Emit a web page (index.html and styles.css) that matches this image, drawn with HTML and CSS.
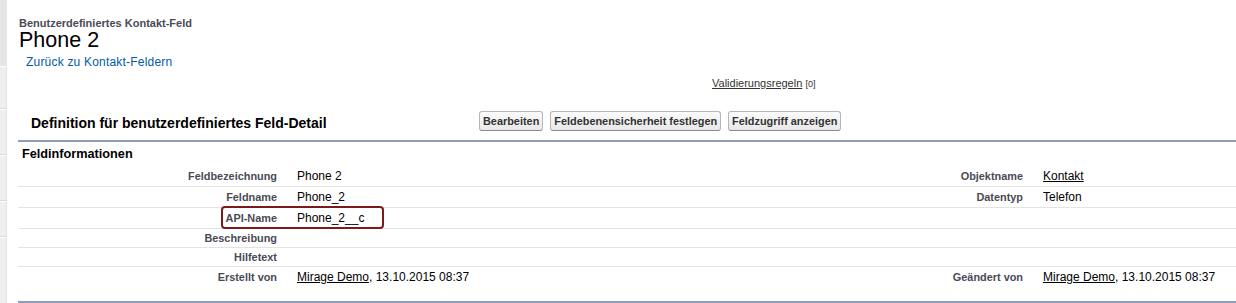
FILE: index.html
```html
<!DOCTYPE html>
<html lang="de">
<head>
  <meta charset="UTF-8" />
  <title>Phone 2 – Benutzerdefiniertes Kontakt-Feld</title>
  <link rel="stylesheet" href="styles.css">
</head>
<body>
  <div class="page">
    <aside class="side-strip">
      <div class="strip-top"></div>
      <div class="strip-seg seg-1"></div>
      <div class="strip-seg seg-2"></div>
      <div class="strip-seg seg-3"></div>
      <div class="strip-seg seg-4"></div>
      <div class="strip-seg seg-5"></div>
    </aside>

    <main class="content">
      <header class="page-head">
        <div class="page-type">Benutzerdefiniertes Kontakt-Feld</div>
        <h1 class="page-title">Phone 2</h1>
        <a class="back-link" href="#">Zurück zu Kontakt-Feldern</a>
      </header>

      <div class="related-links">
        <a href="#">Validierungsregeln</a> <span class="count">[0]</span>
      </div>

      <section class="detail-block">
        <div class="block-head">
          <h2 class="block-title">Definition für benutzerdefiniertes Feld-Detail</h2>
          <div class="block-buttons">
            <button type="button" class="btn">Bearbeiten</button>
            <button type="button" class="btn">Feldebenensicherheit festlegen</button>
            <button type="button" class="btn">Feldzugriff anzeigen</button>
          </div>
        </div>

        <h3 class="sub-title">Feldinformationen</h3>

        <div class="detail-list">
          <div class="row">
            <div class="label">Feldbezeichnung</div>
            <div class="value">Phone 2</div>
            <div class="label">Objektname</div>
            <div class="value"><a href="#">Kontakt</a></div>
          </div>
          <div class="row">
            <div class="label">Feldname</div>
            <div class="value">Phone_2</div>
            <div class="label">Datentyp</div>
            <div class="value">Telefon</div>
          </div>
          <div class="row">
            <div class="label">API-Name</div>
            <div class="value">Phone_2__c</div>
            <div class="label"></div>
            <div class="value"></div>
            <span class="highlight"></span>
          </div>
          <div class="row">
            <div class="label">Beschreibung</div>
            <div class="value"></div>
            <div class="label"></div>
            <div class="value"></div>
          </div>
          <div class="row">
            <div class="label">Hilfetext</div>
            <div class="value"></div>
            <div class="label"></div>
            <div class="value"></div>
          </div>
          <div class="row last">
            <div class="label">Erstellt von</div>
            <div class="value"><a href="#">Mirage Demo</a>, 13.10.2015 08:37</div>
            <div class="label">Geändert von</div>
            <div class="value"><a href="#">Mirage Demo</a>, 13.10.2015 08:37</div>
          </div>
        </div>
      </section>
    </main>
  </div>
</body>
</html>
```

FILE: styles.css
```css
body {
  margin: 0;
  padding: 0;
  background: #fff;
  font-family: "Liberation Sans", Arial, sans-serif;
  color: #000;
  overflow: hidden;
}
.page {
  display: flex;
  height: 303px;
}

/* left navigation strip */
.side-strip {
  width: 7px;
  flex-shrink: 0;
  display: flex;
  flex-direction: column;
}
.strip-top {
  height: 66px;
  background: #e6e6e6;
}
.strip-seg {
  background: #efefef;
  border-top: 1px solid #fff;
  border-bottom: 1px solid #d9d9d9;
  border-right: 1px solid #e2e2e2;
}
.seg-1 { height: 41px; }
.seg-2 { height: 44px; }
.seg-3 { height: 44px; }
.seg-4 { height: 34px; }
.seg-5 { flex: 1; border-bottom: none; }

.content {
  flex: 1;
  margin-left: 11px;
}

/* page header */
.page-head {
  padding-top: 16px;
}
.page-type {
  font-size: 11px;
  line-height: 14px;
  font-weight: bold;
  color: #4a4a56;
  padding-left: 1px;
}
.page-title {
  margin: 0;
  font-size: 21.5px;
  line-height: 20px;
  font-weight: normal;
  padding-left: 1px;
}
.back-link {
  display: block;
  margin-top: 4px;
  padding-left: 8px;
  font-size: 12px;
  line-height: 16px;
  letter-spacing: 0.2px;
  color: #015ba7;
  text-decoration: none;
}

.related-links {
  margin-top: 6px;
  padding-left: 694px;
  font-size: 11px;
  line-height: 14px;
}
.related-links a {
  color: #333;
}
.related-links .count {
  font-size: 9px;
  color: #333;
}

/* detail block */
.detail-block {
  border-bottom: 2px solid #8e9dbe;
}
.block-head {
  display: flex;
  align-items: center;
  margin-top: 14px;
  height: 35px;
  border-bottom: 2px solid #8e9dbe;
}
.block-title {
  width: 448px;
  margin: 0;
  padding: 1px 0 0 13px;
  font-size: 14px;
  line-height: 16px;
  font-weight: bold;
}
.block-buttons {
  display: flex;
  gap: 7px;
  margin-top: -3px;
}
.btn {
  font-family: inherit;
  font-size: 10.9px;
  line-height: 14px;
  font-weight: bold;
  color: #333;
  padding: 2px 3px;
  border: 1px solid #b5b5b5;
  border-bottom-color: #8a8a8a;
  border-radius: 3px;
  background: linear-gradient(#fbfbfb, #e8e8e8);
  cursor: pointer;
}

.sub-title {
  margin: 4px 0 0;
  padding-left: 4px;
  font-size: 12.7px;
  line-height: 16px;
  font-weight: bold;
}

.detail-list {
  margin-top: 4px;
  padding-bottom: 14px;
}
.row {
  position: relative;
  display: grid;
  grid-template-columns: 269px 493px 253px 1fr;
  align-items: baseline;
  border-bottom: 1px solid #e3e3e3;
}
.row.last {
  border-bottom: none;
}
.label {
  text-align: right;
  padding: 3px 10px 2px;
  font-size: 10.9px;
  line-height: 13px;
  font-weight: bold;
  color: #4a4a56;
}
.value {
  padding: 3px 10px 2px;
  font-size: 12px;
  line-height: 15px;
}
.value a {
  color: #000;
}

.highlight {
  position: absolute;
  left: 203px;
  top: -2px;
  width: 159px;
  height: 19px;
  border: 2px solid #7b1a1c;
  border-radius: 4px;
  pointer-events: none;
}
```
